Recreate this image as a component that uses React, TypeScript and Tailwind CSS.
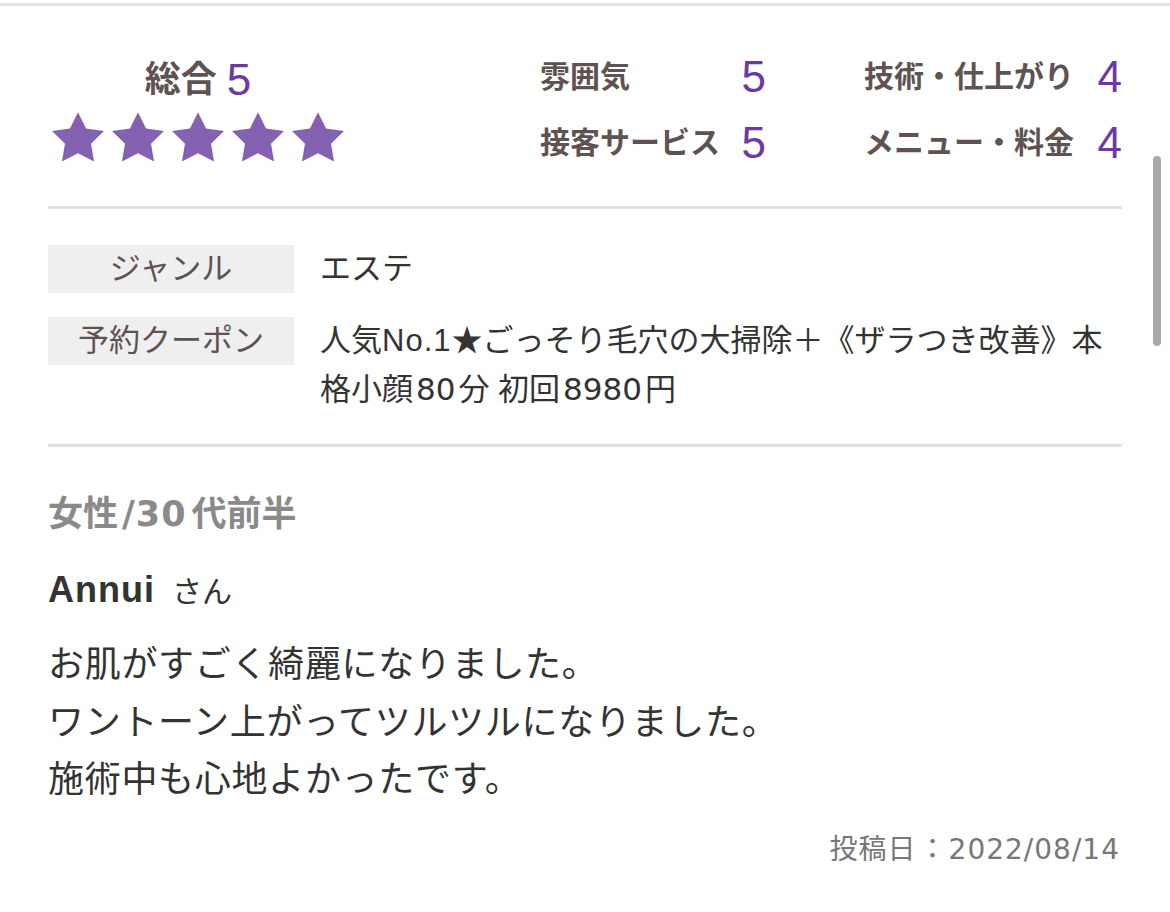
const font = { fontFamily: '"Liberation Sans", "Noto Sans CJK JP", sans-serif' };

const Star = () => (
  <svg viewBox="2 2 20 19.1" className="w-[52px] h-[50px]" fill="#8561b2">
    <polygon points="12,2 15.09,8.26 22,9.27 17,14.14 18.18,21.02 12,17.77 5.82,21.02 7,14.14 2,9.27 8.91,8.26" />
  </svg>
);

type Score = { label: string; value: number };

const scores: Score[] = [
  { label: '雰囲気', value: 5 },
  { label: '技術・仕上がり', value: 4 },
  { label: '接客サービス', value: 5 },
  { label: 'メニュー・料金', value: 4 },
];

const App = () => {
  return (
    <div className="relative w-[1170px] h-[912px] bg-white overflow-hidden" style={font}>
      <div className="mt-[3px] h-[3px] bg-[#e2e2e2]" />

      <div className="mx-[48px]">
        {/* header scores */}
        <div className="flex h-[200px]">
          <div className="w-[300px] pt-[52px] flex flex-col items-center">
            <div className="flex items-center h-[44px] leading-[44px]">
              <span className="text-[36px] font-bold text-[#5e5252]">総合</span>
              <span className="ml-[10px] text-[44px] text-[#6b3aa5]">5</span>
            </div>
            <div className="flex gap-[8px] mt-[10px]">
              {[0, 1, 2, 3, 4].map((i) => (
                <Star key={i} />
              ))}
            </div>
          </div>
          <div className="ml-auto pt-[49px]">
            <div className="grid grid-cols-[226px_258px] gap-x-[98px] gap-y-[22px]">
              {scores.map((s) => (
                <div key={s.label} className="flex items-center justify-between h-[44px]">
                  <span className="text-[30px] font-bold text-[#5e5252] leading-[44px]">{s.label}</span>
                  <span className="text-[44px] text-[#6b3aa5] leading-[44px]">{s.value}</span>
                </div>
              ))}
            </div>
          </div>
        </div>
        <div className="h-[3px] bg-[#e2e2e2]" />

        {/* genre / coupon */}
        <div className="pt-[36px] pb-[30px] flex flex-col gap-[24px]">
          <div className="flex items-start">
            <div className="w-[246px] h-[48px] bg-[#efefef] flex items-center justify-center text-[31px] text-[#5e5252]">
              ジャンル
            </div>
            <div className="ml-[26px] text-[31px] leading-[48px] text-[#333]">エステ</div>
          </div>
          <div className="flex items-start">
            <div className="w-[246px] h-[48px] shrink-0 bg-[#efefef] flex items-center justify-center text-[31px] text-[#5e5252]">
              予約クーポン
            </div>
            <div className="ml-[26px] text-[31px] leading-[48px] text-[#333]">
              人気<span className="tracking-[1px]">No.1</span>★ごっそり毛穴の大掃除＋《ザラつき改善》本
              <br />
              格小顔<span className="mx-[3px] font-['DejaVu_Sans']">80</span>分 初回
              <span className="mx-[3px] font-['DejaVu_Sans']">8980</span>円
            </div>
          </div>
        </div>
        <div className="h-[3px] bg-[#e2e2e2]" />

        {/* review */}
        <div className="pt-[45px]">
          <div className="text-[35px] font-bold leading-[44px] text-[#8a8a8a]">
            女性<span className="ml-[4px] mr-[5px] font-['DejaVu_Sans'] tracking-[1px]">/30</span>代前半
          </div>
          <div className="mt-[32px] flex items-baseline leading-[44px]">
            <span className="text-[36px] font-bold text-[#333] tracking-[1px]">Annui</span>
            <span className="ml-[17px] text-[30px] text-[#333]">さん</span>
          </div>
          <div className="mt-[22px] text-[36px] leading-[57.5px] text-[#333] tracking-[0.7px]">
            <p>お肌がすごく綺麗になりました。</p>
            <p>ワントーン上がってツルツルになりました。</p>
            <p>施術中も心地よかったです。</p>
          </div>
          <div className="mt-[21px] flex justify-end items-center text-[28px] leading-[40px] text-[#777] pr-[2px]">
            <span className="tracking-[1px]">投稿日</span>
            <span className="mx-[2px]">：</span>
            <span className="font-['DejaVu_Sans'] tracking-[1px]">2022/08/14</span>
          </div>
        </div>
      </div>

      <div className="absolute right-[9px] top-[156px] w-[8px] h-[190px] rounded-full bg-[#a9a9a9]" />
    </div>
  );
};

export default App;
